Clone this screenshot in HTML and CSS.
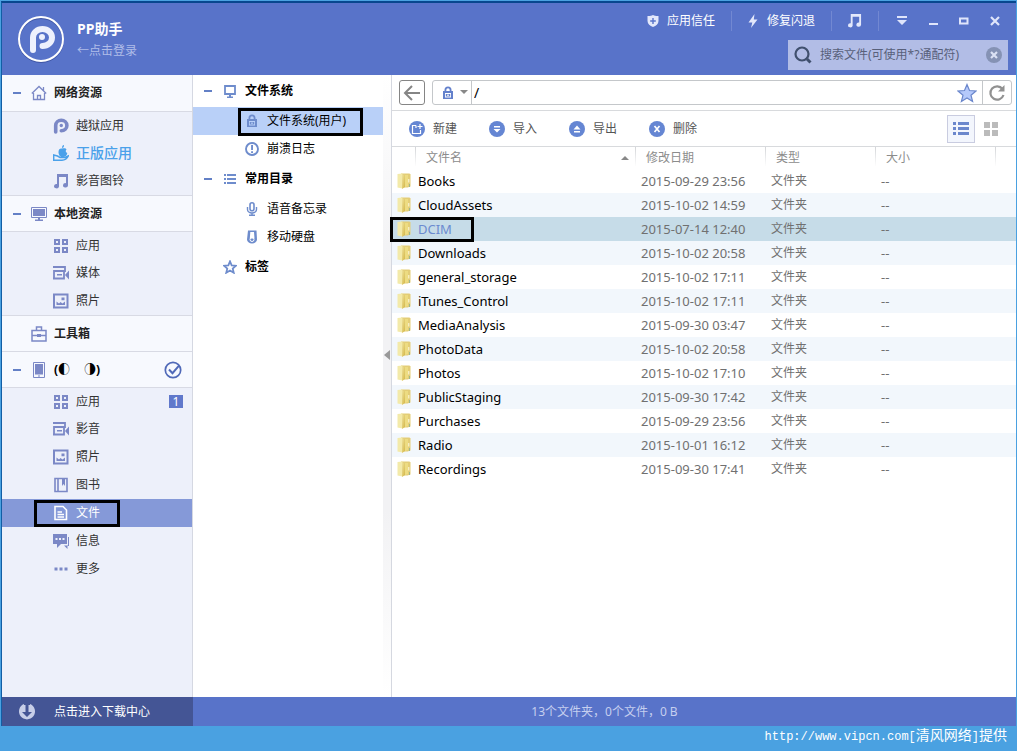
FILE: index.html
```html
<!DOCTYPE html>
<html lang="zh-CN">
<head>
<meta charset="utf-8">
<meta name="viewport" content="width=device-width, initial-scale=1">
<title>PP助手</title>
<link rel="stylesheet" href="styles.css">
</head>
<body>
<svg class="sprite" aria-hidden="true">
  <symbol id="pp" viewBox="0 0 16 16"><path d="M2.700 14V7.500a5.600 5.200 0 1 1 5.600 5.200" fill="none" stroke="currentColor" stroke-width="3.600" stroke-linecap="round"/><circle cx="8.300" cy="7.500" r="1.700" fill="currentColor"/></symbol>
  <symbol id="note" viewBox="0 0 16 16"><path d="M4 1h11v11.500a2.500 2.200 0 1 1-2-2.300V4H6v9.500A2.500 2.200 0 1 1 4 11z" fill="currentColor"/></symbol>
  <symbol id="home" viewBox="0 0 16 16"><path d="M.8 8.500 8 1.500l7.200 7M2.500 8v6.500h11V8M12.500 5.500V2M6.500 14.500v-4h3v4" fill="none" stroke="currentColor" stroke-width="1.300"/></symbol>
  <symbol id="genuine" viewBox="0 0 16 16"><path d="M11 0c.2 2-.8 3-2 3 0-2 .8-2.700 2-3zM5.500 7c0-3 2-4 3.500-3.400C11 3 13 3 13.500 4.500c-1.500 1.500-.5 3 .8 3.500-.5 3-2.300 4.500-4.800 4C7 12.500 5.500 9.500 5.500 7z" fill="currentColor"/><path d="M.7 10V15.200H9c3 0 5-1.500 6.300-4.200l-3.300 1.500H7L4.500 11z" fill="none" stroke="currentColor" stroke-width="1.500"/></symbol>
  <symbol id="monitor" viewBox="0 0 16 16"><path d="M.5 1.500h15v10H.5z" fill="none" stroke="currentColor"/><path d="M2 3h12v7H2zM7 12h2v1.500h3V15H4v-1.500h3z" fill="currentColor"/></symbol>
  <symbol id="apps" viewBox="0 0 16 16"><path d="M2 2h4v4H2zM10 2h4v4h-4zM2 10h4v4H2zM10 10h4v4h-4z" fill="none" stroke="currentColor" stroke-width="2"/></symbol>
  <symbol id="video" viewBox="0 0 16 16"><path d="M0 2h12v5M1 13V6h10v7.500H0" fill="none" stroke="currentColor" stroke-width="1.800"/><path d="m12 10 4-4.500v9zM4 9h5v1.500H4z" fill="currentColor"/></symbol>
  <symbol id="photo" viewBox="0 0 16 16"><path d="M1 1.500h13.500v13H1z" fill="none" stroke="currentColor" stroke-width="2"/><path d="M3.500 12V8.500l2.500 2L7.500 9l2 1.500 2.500-2V12zM8.500 4.500h3v2.800h-3z" fill="currentColor"/></symbol>
  <symbol id="toolbox" viewBox="0 0 16 16"><path d="M1 4.500h14v10.500H1zM5.500 4V1h5v3M1 9.500h14" fill="none" stroke="currentColor" stroke-width="1.500"/><path d="M6 8h4v3H6z" fill="currentColor"/></symbol>
  <symbol id="phone" viewBox="0 0 16 16"><path d="M2.500.500h11v15h-11z" fill="none" stroke="currentColor"/><path d="M4 2h8v10.500H4zM7 13.500h2v1H7z" fill="currentColor"/></symbol>
  <symbol id="book" viewBox="0 0 16 16"><path d="M2 1.500h12v13H2zM5 2v12" fill="none" stroke="currentColor" stroke-width="1.600"/><path d="M9 2h3v7l-1.500-2L9 9z" fill="currentColor"/></symbol>
  <symbol id="file" viewBox="0 0 16 16"><path d="M2 1.500h8L13.500 5v9.500H2zM4.500 7H9M4.500 9.500h6.500M4.500 12h6.500" fill="none" stroke="currentColor" stroke-width="1.600"/></symbol>
  <symbol id="chat" viewBox="0 0 16 16"><path fill-rule="evenodd" d="M0 1h14v10H8L4 15v-4H0zM2.500 5v2h2V5zm3.500 0v2h2V5zm3.500 0v2h2V5zM15 4h1v9h-1.500v3L11 12.500h4z" fill="currentColor"/></symbol>
  <symbol id="more" viewBox="0 0 16 16"><path d="M1.500 6.500h3v3h-3zM6.500 6.500h3v3h-3zM11.500 6.500h3v3h-3z" fill="currentColor"/></symbol>
  <symbol id="check" viewBox="0 0 18 18"><circle cx="9" cy="9" r="7.700" fill="none" stroke="currentColor" stroke-width="1.700"/><path d="m5 8.500 3.500 3.700 6.500-7.500" fill="none" stroke="currentColor" stroke-width="2"/></symbol>
  <symbol id="screen" viewBox="0 0 14 14"><path d="M2 2h10v8H2z" fill="none" stroke="currentColor" stroke-width="1.800"/><path d="M6 10h2v2.500h2V14H4v-1.500h2z" fill="currentColor"/></symbol>
  <symbol id="lock" viewBox="0 0 14 14"><path fill-rule="evenodd" d="M2 5h1.500V4a3.500 3.500 0 0 1 7 0v1H12v8H2zM5.300 5h3.400V4a1.700 1.700 0 0 0-3.400 0zM4 7v4.500h6V7zM4.800 8h4.400v2.600H4.800zM6.300 8.500v1.500h1.400V8.500z" fill="currentColor"/></symbol>
  <symbol id="alert" viewBox="0 0 14 14"><circle cx="7" cy="7" r="6" fill="none" stroke="currentColor" stroke-width="1.900"/><path d="M6.100 3H8v5H6.100zM6.100 9.200H8V11H6.100z" fill="currentColor"/></symbol>
  <symbol id="list" viewBox="0 0 14 14"><path d="M1 2h2v2H1zM1 6h2v2H1zM1 10h2v2H1zM4 2h9v2H4zM4 6h9v2H4zM4 10h9v2H4z" fill="currentColor"/></symbol>
  <symbol id="mic" viewBox="0 0 14 14"><rect x="5" y=".8" width="4" height="8" rx="2" fill="none" stroke="currentColor" stroke-width="1.600"/><path d="M2.500 5v2.500a4.500 3.500 0 0 0 9 0V5M7 11v2.500M4 13.300h6" fill="none" stroke="currentColor" stroke-width="1.400"/></symbol>
  <symbol id="drive" viewBox="0 0 14 14"><path fill-rule="evenodd" d="M3 .500h8.500L12 9.500a5 4 0 0 1-10 0zM5.300 2l-.5 6.500h4.700L9 2z" fill="currentColor"/><circle cx="7" cy="9.500" r="2" fill="none" stroke="#fff"/></symbol>
  <symbol id="star" viewBox="0 0 16 16"><path d="m8 1.500 1.900 4.600 5 .400-3.800 3.200 1.200 4.900L8 12l-4.300 2.600 1.200-4.900-3.800-3.200 5-.4z" fill="none" stroke="currentColor" stroke-width="2"/></symbol>
  <linearGradient id="gold" x1="0" y1="0" x2="1" y2="1"><stop offset="0" stop-color="#f0e4a0"/><stop offset="1" stop-color="#d3b544"/></linearGradient>
  <symbol id="folder" viewBox="0 0 14 16"><path d="M4 .500h8.500l1 1v12l-3 1H4z" fill="#e3cd77"/><path d="M.5 1 5.500.500V15.500L.5 14.500z" fill="#f3eaa9"/><path d="M5 2.500 8 1v13l-3 2z" fill="url(#gold)"/><path d="M8 2h3v11l-3 1z" fill="#eddc82"/><path d="M11.800 6v3.500" stroke="#fffbe0"/><path d="M12.500 11v3" stroke="#9db78a"/></symbol>
</svg>
<div class="app">
  <header class="header">
    <div class="brand">
      <svg class="logo" viewBox="0 0 48 48" aria-hidden="true"><circle cx="24" cy="25" r="22" fill="none" stroke="#3f56a5" stroke-width="2"/><circle cx="24" cy="24" r="22" fill="none" stroke="#fff" stroke-width="2"/><path d="M16 35V22.500a9.500 8.500 0 1 1 9.500 8.500" fill="none" stroke="#eef1fd" stroke-width="6" stroke-linecap="round"/><circle cx="25" cy="22" r="3" fill="#eef1fd"/></svg>
      <div class="brand-text"><h1>PP助手</h1><a href="#">←点击登录</a></div>
    </div>
    <div class="header-tools">
      <div class="top-row">
        <button class="top-link"><svg viewBox="0 0 12 14" width="12" height="14"><path fill-rule="evenodd" d="M6 1c2 1 3.500 1.200 5.500 1v5c0 3-2.500 5-5.500 6C3 12 .5 10 .5 7V2C2.500 2.200 4 2 6 1zM5.300 4v2.300H3.200v1.400h2.100V10h1.400V7.700h2.100V6.300H6.700V4z" fill="currentColor"/></svg>应用信任</button>
        <button class="top-link"><svg viewBox="0 0 12 16" width="12" height="16"><path d="M7.500 1 1.500 9.500h3.800L4 15l6.500-8.500H6.800z" fill="currentColor"/></svg>修复闪退</button>
        <button class="top-link" aria-label="音乐"><svg width="15" height="15"><use href="#note"/></svg></button>
        <div class="win-buttons">
          <button aria-label="菜单"><svg viewBox="0 0 12 12" width="12" height="12"><path d="M1 1h10v2H1zM1 5h10l-5 5z" fill="currentColor"/></svg></button>
          <button aria-label="最小化"><svg viewBox="0 0 12 12" width="12" height="12"><path d="M2 8h9v2H2z" fill="currentColor"/></svg></button>
          <button aria-label="最大化"><svg viewBox="0 0 12 12" width="12" height="12"><path d="M2 3.500h7.500v5H2z" fill="none" stroke="currentColor" stroke-width="2"/></svg></button>
          <button aria-label="关闭"><svg viewBox="0 0 12 12" width="12" height="12"><path d="m2 2 8 8m0-8-8 8" stroke="currentColor" stroke-width="2.200"/></svg></button>
        </div>
      </div>
      <div class="search">
        <svg viewBox="0 0 18 18" width="18" height="18" aria-hidden="true"><circle cx="8" cy="8" r="6.500" fill="none" stroke="#40506e" stroke-width="2.200"/><path d="m13 13 3.500 3.500" stroke="#40506e" stroke-width="3"/></svg>
        <input type="text" aria-label="搜索文件" placeholder="搜索文件(可使用*?通配符)">
        <button aria-label="清除"><svg viewBox="0 0 16 16" width="16" height="16"><circle cx="8" cy="8" r="8" fill="#8592b4"/><path d="m5 5 6 6m0-6-6 6" stroke="#dbe1f3" stroke-width="2.200"/></svg></button>
      </div>
    </div>
  </header>

  <main class="main">
    <nav class="sidebar" aria-label="主导航">
      <a class="group" href="#"><i class="dash"></i><svg><use href="#home"/></svg>网络资源</a>
      <a class="item" href="#"><svg><use href="#pp"/></svg>越狱应用</a>
      <a class="item featured" href="#"><svg><use href="#genuine"/></svg>正版应用</a>
      <a class="item" href="#"><svg><use href="#note"/></svg>影音图铃</a>
      <a class="group" href="#"><i class="dash"></i><svg><use href="#monitor"/></svg>本地资源</a>
      <a class="item" href="#"><svg><use href="#apps"/></svg>应用</a>
      <a class="item" href="#"><svg><use href="#video"/></svg>媒体</a>
      <a class="item" href="#"><svg><use href="#photo"/></svg>照片</a>
      <a class="group" href="#"><i class="dash none"></i><svg><use href="#toolbox"/></svg>工具箱</a>
      <a class="group device" href="#"><i class="dash"></i><svg><use href="#phone"/></svg><span class="device-name"><span>(◐</span><span>◑)</span></span><svg class="check"><use href="#check"/></svg></a>
      <a class="item" href="#"><svg><use href="#apps"/></svg>应用<span class="badge">1</span></a>
      <a class="item" href="#"><svg><use href="#video"/></svg>影音</a>
      <a class="item" href="#"><svg><use href="#photo"/></svg>照片</a>
      <a class="item" href="#"><svg><use href="#book"/></svg>图书</a>
      <a class="item selected" href="#" aria-current="page"><svg><use href="#file"/></svg>文件<span class="mark"></span></a>
      <a class="item" href="#"><svg><use href="#chat"/></svg>信息</a>
      <a class="item" href="#"><svg><use href="#more"/></svg>更多</a>
    </nav>

    <nav class="tree" aria-label="文件目录">
      <a class="branch" href="#"><i class="dash"></i><svg><use href="#screen"/></svg>文件系统</a>
      <a class="leaf selected" href="#"><svg><use href="#lock"/></svg>文件系统(用户)<span class="mark"></span></a>
      <a class="leaf" href="#"><svg><use href="#alert"/></svg>崩溃日志</a>
      <a class="branch" href="#"><i class="dash"></i><svg><use href="#list"/></svg>常用目录</a>
      <a class="leaf" href="#"><svg><use href="#mic"/></svg>语音备忘录</a>
      <a class="leaf" href="#"><svg><use href="#drive"/></svg>移动硬盘</a>
      <a class="branch" href="#"><i class="dash none"></i><svg><use href="#star"/></svg>标签</a>
    </nav>
    <button class="splitter" aria-label="折叠目录"><svg viewBox="0 0 6 10" width="6" height="10"><path d="M6 0v10L0 5z" fill="#999"/></svg></button>

    <section class="files">
      <div class="path-bar">
        <button class="back" aria-label="返回"><svg viewBox="0 0 20 20" width="20" height="20"><path d="M18 10H3m7-7-7 7 7 7" fill="none" stroke="#858585" stroke-width="2"/></svg></button>
        <div class="path">
          <button class="root" aria-label="根目录"><svg width="14" height="14"><use href="#lock"/></svg><svg viewBox="0 0 8 5" width="8" height="5"><path d="M0 0h8L4 4z" fill="#888"/></svg></button>
          <input type="text" aria-label="路径" value="/">
          <button class="fav" aria-label="收藏"><svg viewBox="0 0 20 20" width="20" height="20"><path d="m10 1.500 2.500 6 6.500.5-5 4.200 1.600 6.300L10 15l-5.600 3.500L6 12.200 1 8l6.500-.5z" fill="#b5c9fb" stroke="#6b87cc" stroke-width="1.200"/></svg></button>
          <button class="reload" aria-label="刷新"><svg viewBox="0 0 18 18" width="18" height="18"><path d="M14.500 5A6.700 6.700 0 1 0 15.500 11" fill="none" stroke="#919191" stroke-width="2.200"/><path d="M16.500 1v6.500H10z" fill="#919191"/></svg></button>
        </div>
      </div>
      <div class="actions">
        <button class="action"><svg viewBox="0 0 16 16"><circle cx="8" cy="8" r="8" fill="#6586d3"/><path d="M7 4.500H3.500v8h8V9M7 4.500V7M11 3v5M8.500 5.500h5" fill="none" stroke="#fff" stroke-width="1.200"/></svg>新建</button>
        <button class="action"><svg viewBox="0 0 16 16"><circle cx="8" cy="8" r="8" fill="#6586d3"/><path d="M5 5h6v1.500H5zM4.500 8h7L8 11.500z" fill="#fff"/></svg>导入</button>
        <button class="action"><svg viewBox="0 0 16 16"><circle cx="8" cy="8" r="8" fill="#6586d3"/><path d="M5 10h6v1.500H5zM4.500 8.500h7L8 4.500z" fill="#fff"/></svg>导出</button>
        <button class="action"><svg viewBox="0 0 16 16"><circle cx="8" cy="8" r="8" fill="#6586d3"/><path d="m5.500 5 5 6m0-6-5 6" stroke="#fff" stroke-width="1.700"/></svg>删除</button>
        <div class="views">
          <button class="view active" aria-label="列表视图"><svg viewBox="0 0 16 14" width="16" height="14"><path d="M0 0h3v3H0zM0 5h3v3H0zM0 10h3v3H0zM5 0h11v3H5zM5 5h11v3H5zM5 10h11v3H5z" fill="#6b87cc"/></svg></button>
          <button class="view" aria-label="图标视图"><svg viewBox="0 0 14 14" width="14" height="14"><path d="M0 0h6v6H0zM8 0h6v6H8zM0 8h6v6H0zM8 8h6v6H8z" fill="#bbb"/></svg></button>
        </div>
      </div>
      <table class="list">
        <colgroup><col class="c-icon"><col class="c-name"><col class="c-date"><col class="c-type"><col class="c-size"><col></colgroup>
        <thead><tr><th></th><th><div class="sort">文件名<svg viewBox="0 0 8 4" width="8" height="4"><path d="M0 4h8L4 0z" fill="#888"/></svg></div></th><th>修改日期</th><th>类型</th><th>大小</th><th></th></tr></thead>
        <tbody>
          <tr><td><svg><use href="#folder"/></svg></td><td>Books</td><td>2015-09-29 23:56</td><td>文件夹</td><td>--</td><td></td></tr>
          <tr><td><svg><use href="#folder"/></svg></td><td>CloudAssets</td><td>2015-10-02 14:59</td><td>文件夹</td><td>--</td><td></td></tr>
          <tr class="selected"><td><svg><use href="#folder"/></svg><span class="mark"></span></td><td>DCIM</td><td>2015-07-14 12:40</td><td>文件夹</td><td>--</td><td></td></tr>
          <tr><td><svg><use href="#folder"/></svg></td><td>Downloads</td><td>2015-10-02 20:58</td><td>文件夹</td><td>--</td><td></td></tr>
          <tr><td><svg><use href="#folder"/></svg></td><td>general_storage</td><td>2015-10-02 17:11</td><td>文件夹</td><td>--</td><td></td></tr>
          <tr><td><svg><use href="#folder"/></svg></td><td>iTunes_Control</td><td>2015-10-02 17:11</td><td>文件夹</td><td>--</td><td></td></tr>
          <tr><td><svg><use href="#folder"/></svg></td><td>MediaAnalysis</td><td>2015-09-30 03:47</td><td>文件夹</td><td>--</td><td></td></tr>
          <tr><td><svg><use href="#folder"/></svg></td><td>PhotoData</td><td>2015-10-02 20:58</td><td>文件夹</td><td>--</td><td></td></tr>
          <tr><td><svg><use href="#folder"/></svg></td><td>Photos</td><td>2015-10-02 17:10</td><td>文件夹</td><td>--</td><td></td></tr>
          <tr><td><svg><use href="#folder"/></svg></td><td>PublicStaging</td><td>2015-09-30 17:42</td><td>文件夹</td><td>--</td><td></td></tr>
          <tr><td><svg><use href="#folder"/></svg></td><td>Purchases</td><td>2015-09-29 23:56</td><td>文件夹</td><td>--</td><td></td></tr>
          <tr><td><svg><use href="#folder"/></svg></td><td>Radio</td><td>2015-10-01 16:12</td><td>文件夹</td><td>--</td><td></td></tr>
          <tr><td><svg><use href="#folder"/></svg></td><td>Recordings</td><td>2015-09-30 17:41</td><td>文件夹</td><td>--</td><td></td></tr>
        </tbody>
      </table>
    </section>
  </main>

  <footer class="status">
    <a class="downloads" href="#"><svg viewBox="0 0 16 16" width="16" height="16"><path d="M5 0a8 8 0 1 0 6 0v1H9.500v7H13l-5 5-5-5h3.500V1H5z" fill="#c7cee8"/></svg>点击进入下载中心</a>
    <p>13个文件夹，0个文件，0 B</p>
  </footer>
</div>
<p class="credit">http://www.vipcn.com[<span>清风网络</span>]<span>提供</span></p>
</body>
</html>
```
FILE: styles.css
```css
* { box-sizing: border-box; }

body {
  margin: 0;
  min-height: 100vh;
  display: flex;
  flex-direction: column;
  background: #4aa1e1;
  color: #333;
  font: 12px/16px "Noto Sans", "Noto Sans CJK SC", sans-serif;
}

a { color: inherit; text-decoration: none; }
h1, p { margin: 0; }
svg { flex: none; }
.sprite { position: absolute; width: 0; height: 0; }

button, input {
  margin: 0;
  padding: 0;
  border: 0;
  background: none;
  color: inherit;
  font: inherit;
}

button {
  display: flex;
  align-items: center;
  justify-content: center;
}

.app {
  flex: 1;
  display: flex;
  flex-direction: column;
  margin: 1px 1px 0;
  border-top: 2px solid #07478f;
  border-left: 1px solid #125ea5;
}

/* Header */
.header {
  display: flex;
  justify-content: space-between;
  height: 72px;
  background: #5873c9;
  color: #fff;
}

.brand {
  display: flex;
  align-items: center;
  gap: 12px;
  padding-left: 15px;
}

.logo { width: 48px; height: 48px; }
.brand-text { display: flex; flex-direction: column; gap: 4px; }
.brand-text h1 { font-size: 14px; line-height: 20px; }
.brand-text a { color: #b0bde8; }

.header-tools {
  display: flex;
  flex-direction: column;
  align-items: flex-end;
  gap: 2px;
  padding-right: 8px;
}

.top-row { display: flex; align-items: center; height: 35px; margin-right: -2px; }

.top-link {
  gap: 8px;
  height: 20px;
  padding: 0 16px 0 15px;
  border-right: 1px solid #7288d2;
}

.top-link svg { color: #e3e8fb; }
.win-buttons { display: flex; padding-left: 7px; }
.win-buttons button { width: 31px; height: 20px; color: #dfe5fb; }

.search {
  display: flex;
  align-items: center;
  gap: 8px;
  width: 220px;
  height: 30px;
  padding: 0 6px;
  background: #b2bde6;
}

.search input { flex: 1; min-width: 0; outline: 0; }
.search input::placeholder { color: #58607a; opacity: 1; }

/* Body */
.main { flex: 1; display: flex; background: #fff; }

.dash { flex: none; width: 8px; height: 2px; background: #6380c6; }
.dash.none { background: none; }

.mark {
  position: absolute;
  border: 3px solid #000;
  pointer-events: none;
}

.sidebar {
  flex: none;
  width: 191px;
  border-right: 1px solid #d5d8e2;
  background: #edf0fa;
}

.sidebar svg { width: 16px; height: 16px; color: #7b88c6; }

.group {
  display: flex;
  align-items: center;
  height: 36px;
  padding: 0 10px 0 11px;
  background: #f7f9fe;
  color: #222;
  font-weight: bold;
}

.group + .group,
.item + .group,
.group + .item { border-top: 1px solid #d8dae4; }

.group .dash { margin-right: 10px; }
.group svg { margin-right: 7px; }
.device-name { display: flex; flex: 1; gap: 14px; color: #000; }
.sidebar .check { width: 18px; height: 18px; margin: 0; color: #5069b8; }

.item {
  position: relative;
  display: flex;
  align-items: center;
  gap: 7px;
  height: 28px;
  padding: 0 9px 0 51px;
}

.item.featured { color: #4aa1ea; font-size: 14px; font-weight: 500; }
.sidebar .featured svg { color: #4aa1ea; }
.item.selected { background: #8599d8; color: #fff; }
.sidebar .selected svg { color: #fff; }
.item .mark { inset: 1px 72px 0 32px; }

.badge {
  margin-left: auto;
  width: 14px;
  line-height: 13px;
  background: #6078cb;
  color: #fff;
  text-align: center;
}

.tree { flex: none; width: 190px; color: #000; }
.tree svg { width: 14px; height: 14px; color: #6e8ccc; }

.branch {
  display: flex;
  align-items: center;
  gap: 8px;
  height: 32px;
  padding-left: 11px;
  font-weight: bold;
}

.branch .dash { margin-right: 3px; }

.leaf {
  position: relative;
  display: flex;
  align-items: center;
  gap: 8px;
  height: 28px;
  padding-left: 52px;
}

.leaf.selected { background: #b9d0f8; }
.leaf .mark { inset: 1px 20px -1px 45px; }

.splitter {
  flex: none;
  width: 8px;
  background: linear-gradient(#fff, #f2f2f4 30%, #f2f2f4 70%, #fff);
  padding-bottom: 62px;
}

/* File list */
.files { flex: 1; min-width: 0; border-left: 1px solid #d5d8e0; }

.path-bar {
  display: flex;
  gap: 7px;
  height: 36px;
  padding: 5px 4px 5px 7px;
  border-bottom: 1px solid #d8dadd;
}

.back { width: 26px; border: 1px solid #858585; border-radius: 3px; }

.path {
  flex: 1;
  display: flex;
  border: 1px solid #c4c7ca;
  border-radius: 3px;
}

.root { width: 39px; gap: 5px; padding-left: 4px; border-right: 1px solid #c4c7ca; color: #6380cc; }
.path input { flex: 1; min-width: 0; padding-left: 2px; outline: 0; color: #000; font-size: 14px; }
.fav { width: 30px; }
.reload { width: 29px; border-left: 1px solid #c4c7ca; }

.actions {
  display: flex;
  align-items: center;
  gap: 32px;
  height: 36px;
  padding: 0 11px 0 17px;
  border-bottom: 1px solid #d8dadd;
  color: #555;
}

.action { gap: 8px; }
.action svg { width: 16px; height: 16px; }
.views { display: flex; margin-left: auto; }
.view { width: 28px; height: 28px; border: 1px solid transparent; }
.view + .view { margin-left: 2px; }
.view.active { border-color: #c9cce0; background: #f3f6fd; }

.list {
  width: 100%;
  border-collapse: collapse;
  table-layout: fixed;
  color: #707070;
}

.c-icon { width: 24px; }
.c-name { width: 220px; }
.c-date { width: 130px; }
.c-type { width: 110px; }
.c-size { width: 120px; }

.list th {
  height: 22px;
  padding: 0 0 0 10px;
  background: linear-gradient(#d3d5d8, #fff 90%) right top / 1px 100% no-repeat;
  color: #8c8c8c;
  font-weight: normal;
  text-align: left;
}

.list th:last-child { background: none; }
.sort { display: flex; align-items: center; justify-content: space-between; padding-right: 7px; }

.list td { height: 24px; padding: 0 0 0 5px; }
.list td:first-child { position: relative; }
.list td:nth-child(2) { padding-left: 2px; color: #000; font-size: 13px; }
.list td:nth-child(3),
.list td:nth-child(5) { font-size: 13px; }
.list td svg { display: block; width: 14px; height: 16px; }
.list tbody tr:nth-child(even) { background: #f2f7fc; }
.list tbody tr.selected { background: #c6dce8; }
.list tr.selected td:nth-child(2) { color: #6b8bd0; }
.list .mark { top: 0; left: -2px; width: 84px; height: 25px; }

/* Footer */
.status { display: flex; height: 29px; background: #5873c9; color: #c6cfef; }

.downloads {
  display: flex;
  align-items: center;
  gap: 19px;
  width: 191px;
  padding-left: 17px;
  background: #445595;
  color: #fff;
}

.status p { flex: 1; align-self: center; text-align: center; }

.credit {
  height: 25px;
  padding: 2px 10px 0 0;
  color: #fff;
  font: 12px/16px "Liberation Mono", "Noto Sans CJK SC", monospace;
  text-align: right;
}

.credit span { font-size: 14px; }
```
